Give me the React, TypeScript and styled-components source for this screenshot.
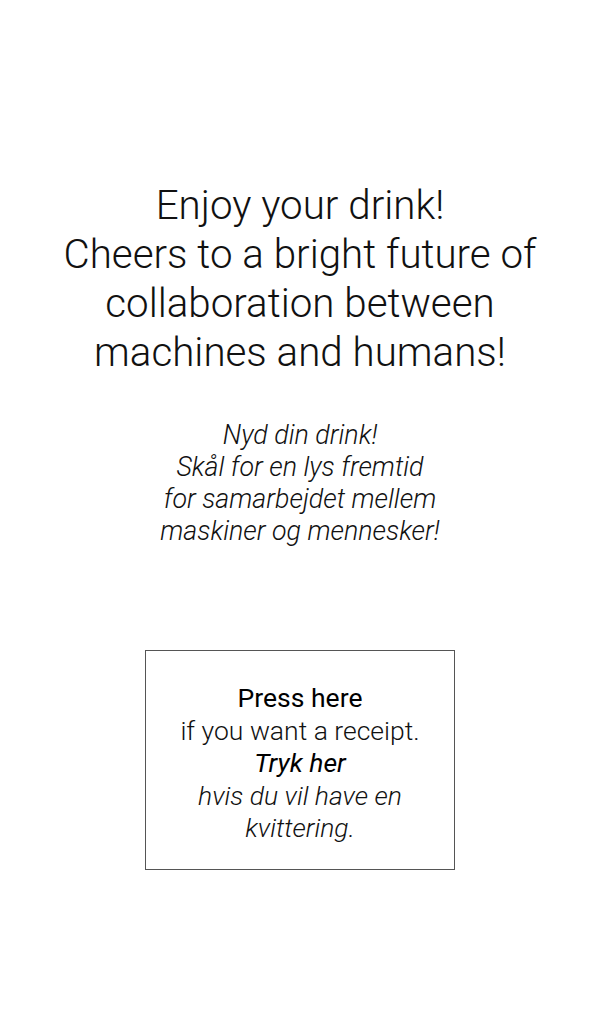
import React from "react";
import styled, { createGlobalStyle } from "styled-components";

const Global = createGlobalStyle`
  html, body { margin: 0; padding: 0; background: #fff; }
  body { font-family: Roboto, "Noto Sans", sans-serif; color: #111; }
`;

const Page = styled.main`
  width: 600px;
  min-height: 1024px;
  display: flex;
  flex-direction: column;
  align-items: center;
  padding-top: 181px;
  box-sizing: border-box;
`;

const Headline = styled.h1`
  margin: 0;
  font-weight: 300;
  font-size: 40.3px;
  line-height: 49px;
  text-align: center;
  color: #111;
`;

const Subline = styled.p`
  margin: 42px 0 0;
  font-weight: 300;
  font-style: italic;
  font-size: 26.8px;
  line-height: 32px;
  text-align: center;
  color: #111;
`;

const ReceiptButton = styled.button`
  margin-top: 103px;
  width: 310px;
  height: 220px;
  box-sizing: border-box;
  border: 1px solid #555;
  background: #fff;
  padding: 31px 10px 0;
  display: flex;
  flex-direction: column;
  align-items: center;
  justify-content: flex-start;
  font-family: Roboto, "Noto Sans", sans-serif;
  cursor: pointer;
`;

const Line = styled.span<{ $strong?: boolean; $italic?: boolean }>`
  display: block;
  font-size: 26.5px;
  line-height: 32.5px;
  font-weight: ${(p) => (p.$strong ? 400 : 300)};
  font-style: ${(p) => (p.$italic ? "italic" : "normal")};
  color: ${(p) => (p.$strong ? "#000" : "#111")};
  text-align: center;
  white-space: nowrap;
`;

export default function App() {
  return (
    <>
      <Global />
      <Page>
        <Headline>
          Enjoy your drink!
          <br />
          Cheers to a bright future of
          <br />
          collaboration between
          <br />
          machines and humans!
        </Headline>
        <Subline>
          Nyd din drink!
          <br />
          Skål for en lys fremtid
          <br />
          for samarbejdet mellem
          <br />
          maskiner og mennesker!
        </Subline>
        <ReceiptButton>
          <Line $strong>Press here</Line>
          <Line>if you want a receipt.</Line>
          <Line $strong $italic>Tryk her</Line>
          <Line $italic>hvis du vil have en</Line>
          <Line $italic>kvittering.</Line>
        </ReceiptButton>
      </Page>
    </>
  );
}
